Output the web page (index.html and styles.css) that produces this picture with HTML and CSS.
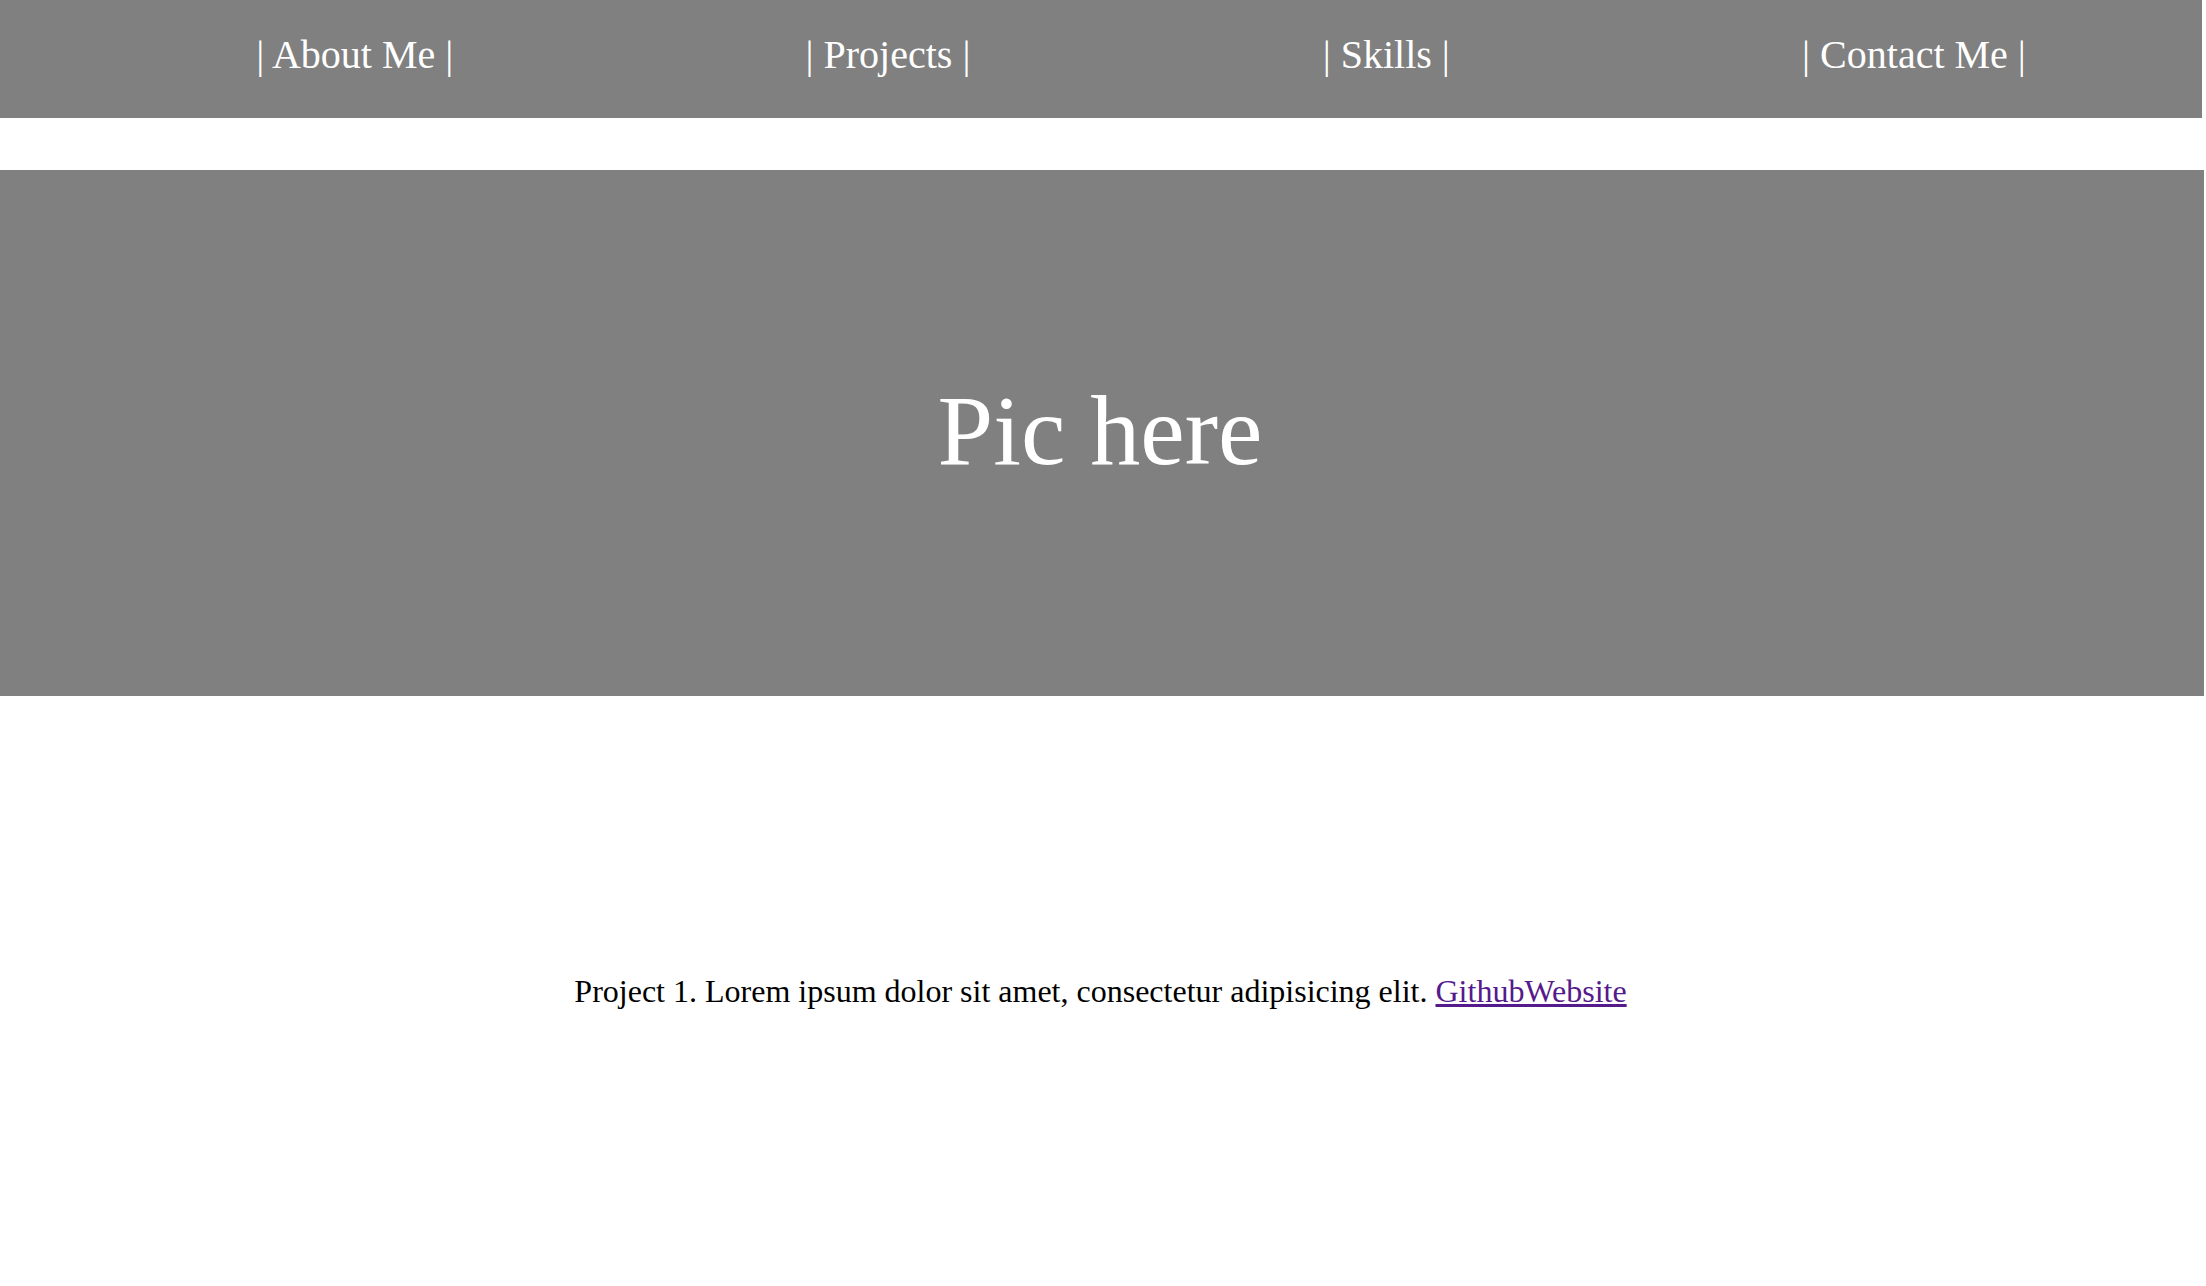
FILE: index.html
```html
<!DOCTYPE html>
<html lang="en">
<head>
<meta charset="utf-8">
<title>Portfolio</title>
<link rel="stylesheet" href="styles.css">
</head>
<body>
<nav class="topnav">
  <ul class="nav-list">
    <li class="nav-item">| About Me |</li>
    <li class="nav-item">| Projects |</li>
    <li class="nav-item">| Skills |</li>
    <li class="nav-item">| Contact Me |</li>
  </ul>
</nav>
<section class="hero">
  <h1 class="hero-text">Pic here</h1>
</section>
<section class="projects">
  <p class="project">Project 1. Lorem ipsum dolor sit amet, consectetur adipisicing elit. <a class="project-link" href="#">GithubWebsite</a></p>
</section>
</body>
</html>
```
FILE: styles.css
```css
html, body {
  margin: 0;
  padding: 0;
  background: #ffffff;
}

body {
  font-family: "Liberation Serif", "Times New Roman", serif;
  color: #000000;
}

.topnav {
  background: #808080;
  margin-right: 4px;
  height: 118px;
  box-sizing: border-box;
}

.nav-list {
  list-style: none;
  margin: 0;
  padding: 32px 0 0 80px;
  display: flex;
  justify-content: space-around;
}

.nav-item {
  color: #ffffff;
  font-size: 40px;
  line-height: 46px;
  white-space: nowrap;
}

.hero {
  margin: 52px 2px 0 0;
  height: 526px;
  background: #808080;
  display: flex;
  align-items: center;
  justify-content: center;
}

.hero-text {
  margin: 0;
  color: #ffffff;
  font-size: 100px;
  font-weight: normal;
  line-height: 115px;
  padding: 0 4px 6px 0;
}

.projects {
  margin-top: 277px;
  padding-right: 5px;
  text-align: center;
}

.project {
  margin: 0;
  font-size: 32px;
  line-height: 37px;
}

.project-link {
  color: #551a8b;
  text-decoration: underline;
}
```
